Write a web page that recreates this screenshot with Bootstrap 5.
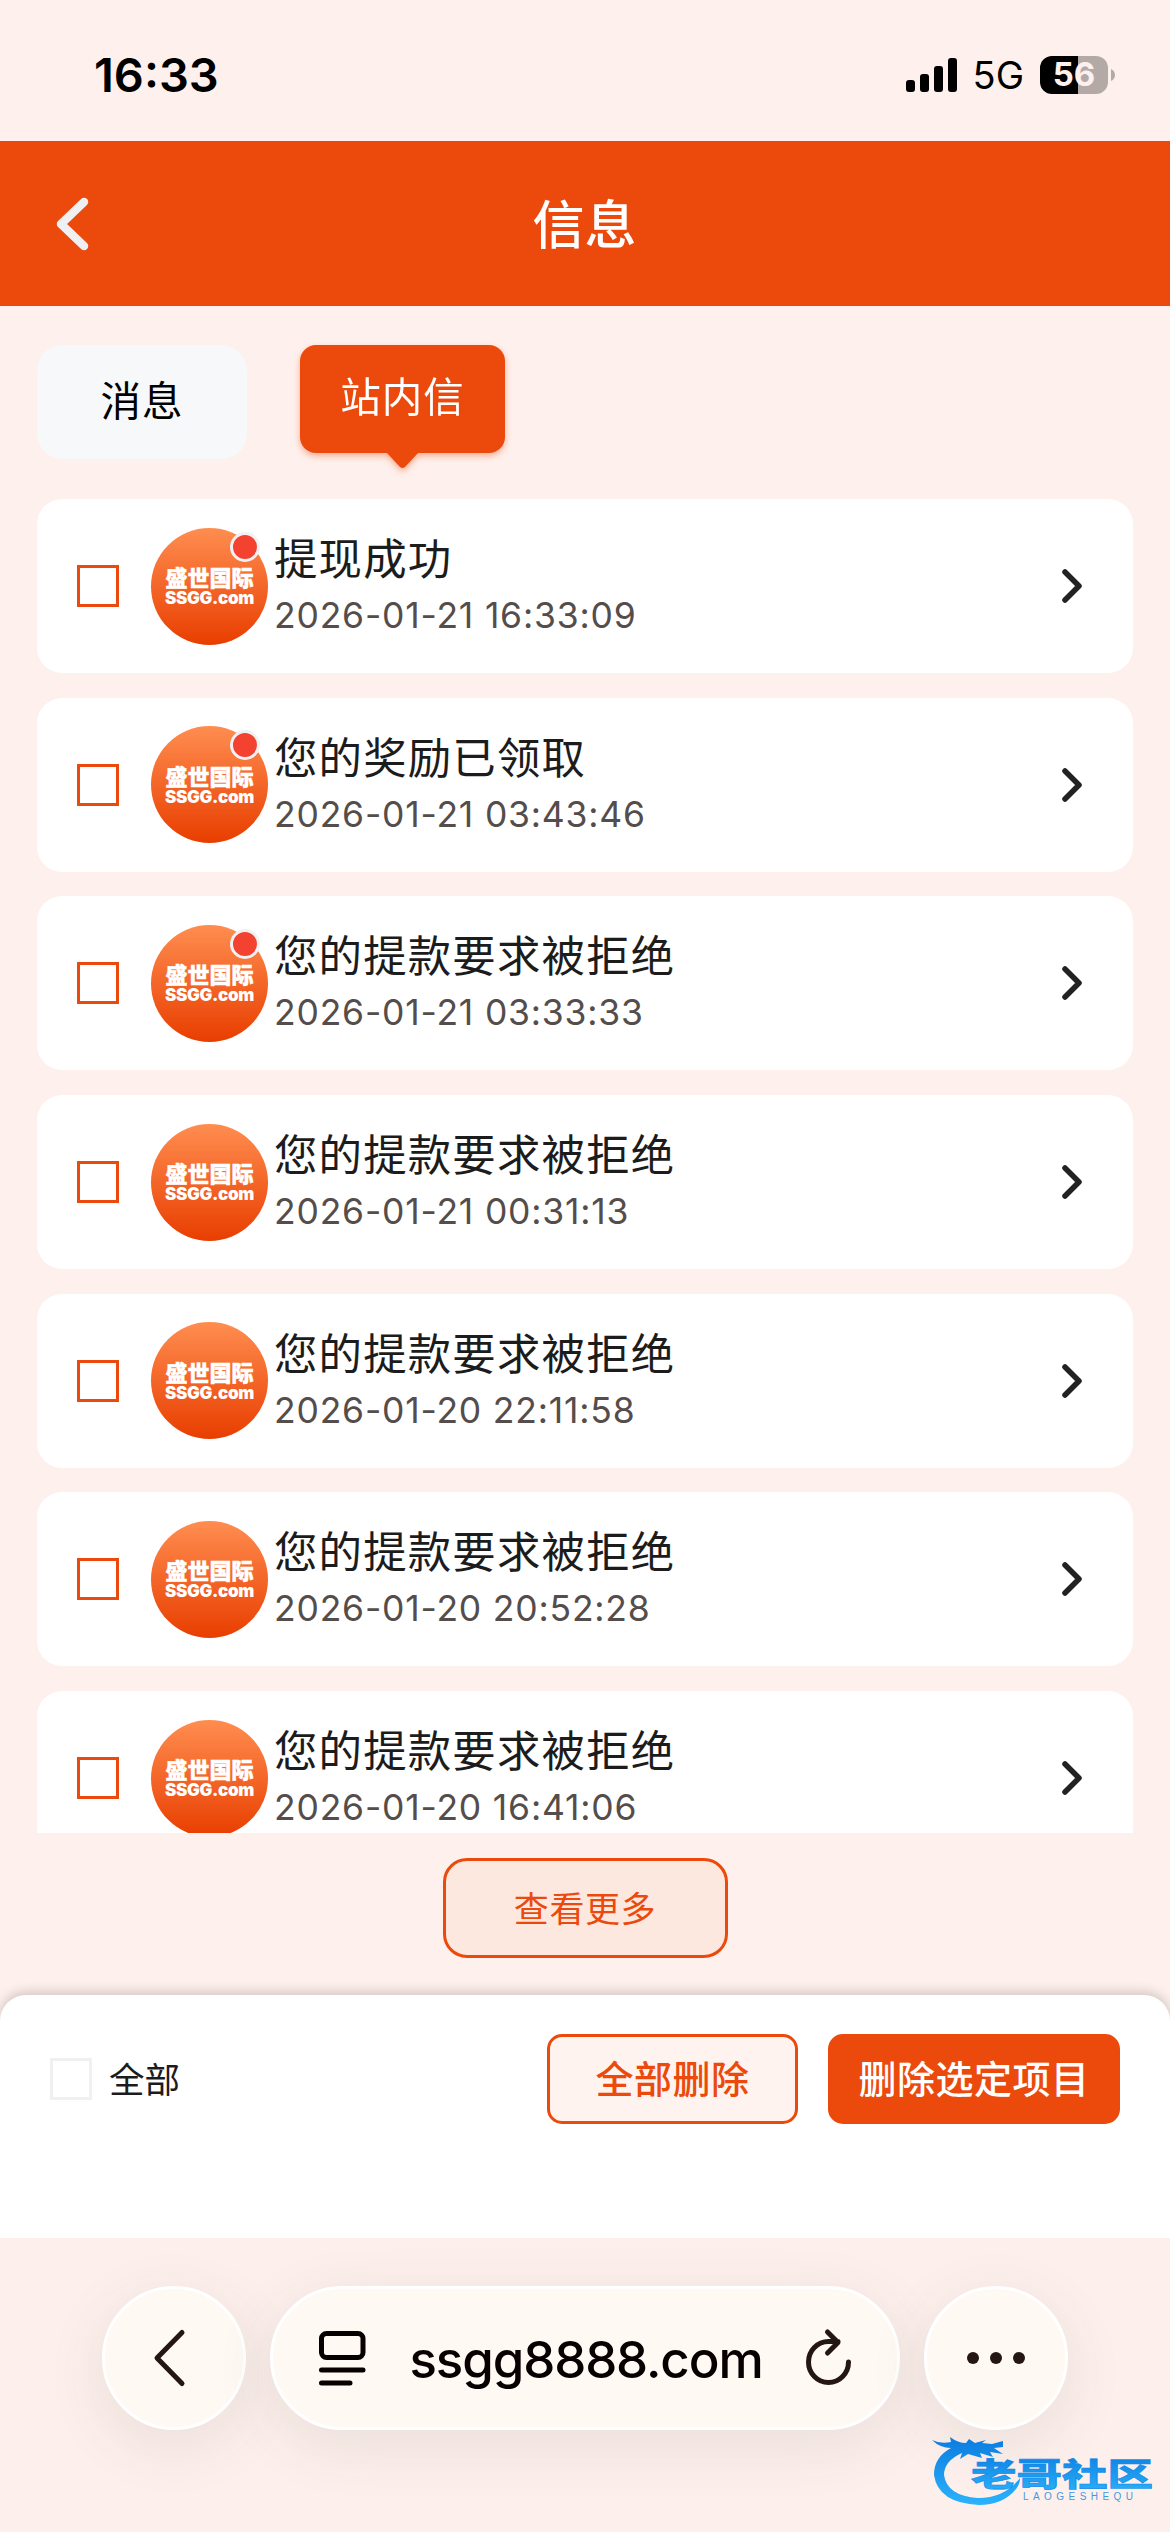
<!DOCTYPE html>
<html lang="zh-CN">
<head>
    <meta charset="UTF-8">
    <meta name="viewport" content="width=device-width, initial-scale=1.0">
    <title>信息</title>
    <link href="https://cdn.jsdelivr.net/npm/bootstrap@5.3.0/dist/css/bootstrap.min.css" rel="stylesheet">
    <style>
        :root { --orange: #eb4a0c; }
        body {
            font-family: Inter, "Noto Sans CJK SC", sans-serif;
            background: #fef0ec;
            color: #1c1c1c;
            width: 1170px;
            height: 2532px;
            overflow: hidden;
            line-height: 1;
        }
        svg { display: block; flex: none; }

        .status { height: 141px; padding: 0 55px 0 94px; color: #000; }
        .status .clock { font-size: 47px; font-weight: 600; margin-top: 7px; }
        .status .net { font-size: 38px; margin: 0 16px 0 15px; }
        .battery { width: 68px; height: 38px; border-radius: 12px; margin-right: 3px; background: linear-gradient(90deg, #000 38px, #b3aaa8 38px); color: #fef0ec; font-size: 33px; font-weight: 700; }

        .topbar { height: 165px; background: var(--orange); padding-left: 54px; }
        .topbar h1 { font-size: 52px; font-weight: 500; margin-left: -91px; padding-top: 6px; }

        .tabs { padding: 39px 37px 0; height: 193px; gap: 53px; }
        .tab { font-size: 40.5px; letter-spacing: 1px; }
        .tab-a { width: 210px; height: 114px; border-radius: 25px; background: #f6f8fa; color: #000; }
        .tab-b { width: 205px; height: 108px; border-radius: 16px; padding-bottom: 2px; background: var(--orange); filter: drop-shadow(0 3px 3px rgba(235, 74, 12, .4)); }
        .tab-b svg { top: 107px; left: 86px; }

        .msgs { height: 1334px; padding: 0 37px; gap: 24.7px; overflow: hidden; }
        .msg { height: 174px; border-radius: 25px; padding: 0 49px 0 40px; flex: none; }
        .box { width: 42px; height: 42px; border: 3px solid var(--orange); flex: none; }
        .avatar { width: 117px; height: 117px; margin: 0 6px 0 32px; background: linear-gradient(#ff8d50, #e83e00); flex: none; }
        .avatar b { font-size: 22px; font-weight: 900; line-height: 22px; -webkit-text-stroke: .4px #fff; }
        .avatar i { font-style: normal; font-size: 17px; font-weight: 900; line-height: 14px; letter-spacing: -.3px; margin-top: 2px; }
        .unread { width: 30px; height: 30px; border: 3px solid #f1f1f4; background: #f3422f; top: 4px; right: 8px; }
        .subject { font-size: 43.4px; letter-spacing: 1.2px; line-height: 56px; padding-top: 3px; }
        .date { font-size: 35.5px; color: #554d4b; line-height: 56px; letter-spacing: .8px; padding-top: 1px; }

        .more { height: 162px; padding-top: 25px; }
        .btn-more { width: 285px; height: 100px; border: 3px solid var(--orange); border-radius: 24px; background: #fce8df; color: var(--orange); font-size: 35px; letter-spacing: .6px; padding-top: 2px; }

        .actions { height: 243px; border-radius: 26px 26px 0 0; padding: 39px 50px 0; box-shadow: 0 -3px 12px rgba(0, 0, 0, .18); }
        .actions .box { border-color: #eff0f2; }
        .all { font-size: 35.5px; margin-left: 17px; padding-top: 3px; }
        .act { height: 90px; border: 3px solid var(--orange); border-radius: 15px; font-size: 38px; font-weight: 500; letter-spacing: .5px; }
        .act-a { width: 251px; background: #fef3ee; color: var(--orange); margin-right: 30px; }
        .act-b { width: 292px; background: var(--orange); }

        .safari { height: 294px; padding: 48px 102px 0; gap: 24px; background: #fdf0ec; overflow: hidden; }
        .glass { height: 144px; border: 3px solid #fff; border-radius: 72px; background: #fef9f3; box-shadow: 0 15px 60px rgba(60, 70, 55, .1); }
        .round { width: 144px; }
        .addr { width: 630px; padding: 0 45px 0 46px; color: #080000; }
        .addr span { font-size: 51px; font-weight: 500; letter-spacing: -1.1px; padding-top: 2px; }
        .brandmark { left: 928px; top: 2430px; }
    </style>
</head>
<body>
    <header class="status d-flex align-items-center">
        <div class="clock">16:33</div>
        <div class="d-flex align-items-center ms-auto mt-2">
            <svg width="52" height="34" viewBox="0 0 52 34">
                <rect x="0" y="22" width="9" height="12" rx="3"/>
                <rect x="14" y="16" width="9" height="18" rx="3"/>
                <rect x="28" y="8" width="9" height="26" rx="3"/>
                <rect x="42" y="0" width="9" height="34" rx="3"/>
            </svg>
            <div class="net">5G</div>
            <div class="battery d-flex align-items-center justify-content-center">56</div>
            <svg width="4" height="12" viewBox="0 0 4 12"><path d="M0 0Q4 2 4 6T0 12z" fill="#b3aaa8"/></svg>
        </div>
    </header>

    <nav class="topbar d-flex align-items-center text-white">
        <svg width="36" height="56" viewBox="0 0 36 56"><path d="M30 6L7 28L30 50" fill="none" stroke="#f0f0f4" stroke-width="8.500" stroke-linecap="round" stroke-linejoin="round"/></svg>
        <h1 class="flex-fill text-center mb-0">信息</h1>
    </nav>

    <div class="tabs d-flex align-items-start">
        <div class="tab tab-a d-flex align-items-center justify-content-center">消息</div>
        <div class="tab tab-b d-flex align-items-center justify-content-center text-white position-relative">站内信
            <svg class="position-absolute" width="33" height="17" viewBox="0 0 33 17"><path d="M0 0H33L19 15Q16.500 17 14 15z" fill="#eb4a0c"/></svg>
        </div>
    </div>

    <main class="msgs d-flex flex-column" id="msgs"></main>

    <div class="more d-flex justify-content-center">
        <div class="btn-more d-flex align-items-center justify-content-center">查看更多</div>
    </div>

    <section class="actions bg-white position-relative">
        <div class="d-flex align-items-center">
            <div class="box"></div>
            <div class="all me-auto">全部</div>
            <div class="act act-a d-flex align-items-center justify-content-center">全部删除</div>
            <div class="act act-b d-flex align-items-center justify-content-center text-white">删除选定项目</div>
        </div>
    </section>

    <footer class="safari d-flex position-relative">
        <div class="glass round d-flex align-items-center justify-content-center">
            <svg width="42" height="60" viewBox="0 0 42 60"><path d="M29 4.500L4 30L29 55.500" fill="none" stroke="#231613" stroke-width="5" stroke-linecap="round" stroke-linejoin="round"/></svg>
        </div>
        <div class="glass addr d-flex align-items-center justify-content-between">
            <svg width="47" height="56" viewBox="0 0 47 56" fill="none" stroke="#080000" stroke-width="5" stroke-linecap="round">
                <rect x="2.500" y="3.500" width="41.500" height="24" rx="5"/>
                <path d="M2.500 40H44M2.500 53H31"/>
            </svg>
            <span>ssgg8888.com</span>
            <svg width="46" height="60" viewBox="0 0 46 60" fill="none" stroke="#231613" stroke-width="5" stroke-linecap="round" stroke-linejoin="round">
                <path d="M42.500 34A20 20.500 0 1 1 22.500 13.500H32M21.500 4L32 14.500L21.500 25"/>
            </svg>
        </div>
        <div class="glass round d-flex align-items-center justify-content-center">
            <svg width="60" height="14" viewBox="0 0 60 14" fill="#231613"><circle cx="7" cy="7" r="6"/><circle cx="30" cy="7" r="6"/><circle cx="53" cy="7" r="6"/></svg>
        </div>
    </footer>

    <!-- marque flottante du forum -->
    <svg class="brandmark position-absolute" width="230" height="84" viewBox="0 0 230 84">
        <defs>
            <linearGradient id="blue" x1="0" y1="0" x2="0" y2="1"><stop offset="0" stop-color="#0b7be0"/><stop offset="1" stop-color="#2bb3fb"/></linearGradient>
        </defs>
        <path fill="url(#blue)" d="M4 10Q12 14 23 12L22 7Q30 13 38 13L41 9L47 13L58 10L54 13L64 14L75 11V17L66 18L75 24L62 22L65 27L52 23L54 28L40 24L32 29L34 23Q16 31 16 45Q19 66 50 68Q77 68 92 48Q92 54 88 59Q75 75 51 75Q10 73 6 45Q6 27 23 18Q12 18 4 10z"/>
        <text x="43" y="56" fill="url(#blue)" stroke="#1489e8" stroke-width=".6" font-family="Noto Sans CJK SC" font-weight="900" font-size="32" textLength="182" lengthAdjust="spacingAndGlyphs">老哥社区</text>
        <text x="95" y="70" fill="#3d9ae6" font-family="Liberation Sans" font-size="10" textLength="110">LAOGESHEQU</text>
    </svg>

<script>
    const messages = [
        { titre: "提现成功", date: "2026-01-21 16:33:09", nouveau: true },
        { titre: "您的奖励已领取", date: "2026-01-21 03:43:46", nouveau: true },
        { titre: "您的提款要求被拒绝", date: "2026-01-21 03:33:33", nouveau: true },
        { titre: "您的提款要求被拒绝", date: "2026-01-21 00:31:13" },
        { titre: "您的提款要求被拒绝", date: "2026-01-20 22:11:58" },
        { titre: "您的提款要求被拒绝", date: "2026-01-20 20:52:28" },
        { titre: "您的提款要求被拒绝", date: "2026-01-20 16:41:06" }
    ];

    document.getElementById("msgs").innerHTML = messages.map(m => `
        <div class="msg bg-white d-flex align-items-center">
            <div class="box"></div>
            <div class="avatar rounded-circle position-relative text-white d-flex flex-column align-items-center justify-content-center">
                <b>盛世国际</b><i>SSGG.com</i>
                ${m.nouveau ? '<div class="unread rounded-circle position-absolute"></div>' : ''}
            </div>
            <div class="flex-fill">
                <div class="subject">${m.titre}</div>
                <div class="date">${m.date}</div>
            </div>
            <svg width="24" height="38" viewBox="0 0 24 38"><path d="M5 5L19 19L5 33" fill="none" stroke="#222" stroke-width="5.500" stroke-linecap="round" stroke-linejoin="round"/></svg>
        </div>`).join("");
</script>
<script src="https://cdn.jsdelivr.net/npm/bootstrap@5.3.0/dist/js/bootstrap.bundle.min.js"></script>
</body>
</html>
